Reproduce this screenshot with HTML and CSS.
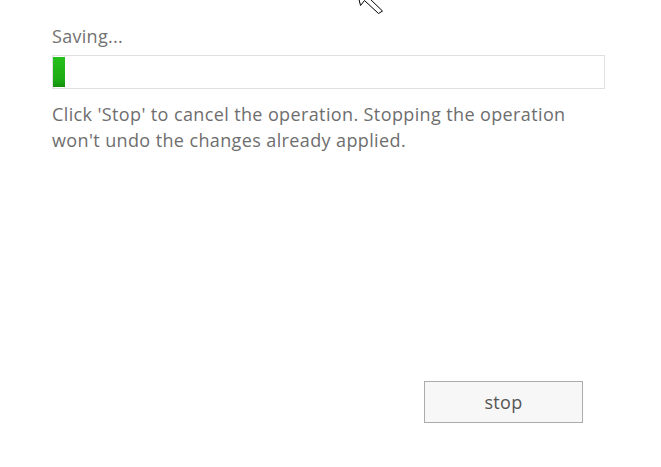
FILE: index.html
```html
<!DOCTYPE html>
<html>
<head>
<meta charset="utf-8">
<link rel="stylesheet" href="styles.css">
</head>
<body>
<div class="dialog">
  <div class="status">Saving...</div>
  <div class="progress"><div class="progress-fill" style="width: 12px"></div></div>
  <p class="message">Click 'Stop' to cancel the operation. Stopping the operation won't undo the changes already applied.</p>
  <div class="actions">
    <button class="stop-btn" type="button">stop</button>
  </div>
</div>
<svg class="cursor" width="40" height="32" viewBox="0 0 40 32">
  <path d="M3.5 0.5 L8.5 20.5 L12.5 15.5 L26.5 28.5 L30.5 26 L16.5 12.5 L24.5 10.5 Z" fill="#fff" stroke="#000" stroke-width="1" stroke-linejoin="round"/>
</svg>
</body>
</html>
```
FILE: styles.css
```css
html, body {
  margin: 0;
  padding: 0;
  background: #fff;
}
body {
  width: 661px;
  height: 467px;
  overflow: hidden;
  position: relative;
  font-family: "Open Sans", "Noto Sans", sans-serif;
  color: #6a6a6a;
}
.dialog {
  padding: 26px 56px 0 52px;
  display: flex;
  flex-direction: column;
}
.status {
  font-size: 18px;
  line-height: 20px;
  letter-spacing: 0.3px;
  color: #727272;
}
.progress {
  margin-top: 9px;
  height: 32px;
  border: 1px solid #e0e0e0;
  background: #fff;
  display: flex;
}
.progress-fill {
  margin: 1px 0 1px 0;
  background: linear-gradient(#25c01c, #1dab13 75%, #148f0c);
}
.message {
  margin: 12px 0 0 0;
  font-size: 18px;
  line-height: 26px;
  letter-spacing: 0.38px;
  color: #6e6e6e;
}
.actions {
  display: flex;
  justify-content: flex-end;
  padding-top: 228px;
  padding-right: 22px;
}
.stop-btn {
  width: 159px;
  height: 42px;
  border: 1px solid #ababab;
  background: #f7f7f7;
  font-family: "Open Sans", "Noto Sans", sans-serif;
  font-size: 18px;
  letter-spacing: 0.3px;
  color: #555;
  padding: 0;
}
.cursor {
  position: absolute;
  left: 352px;
  top: -15px;
}
```
